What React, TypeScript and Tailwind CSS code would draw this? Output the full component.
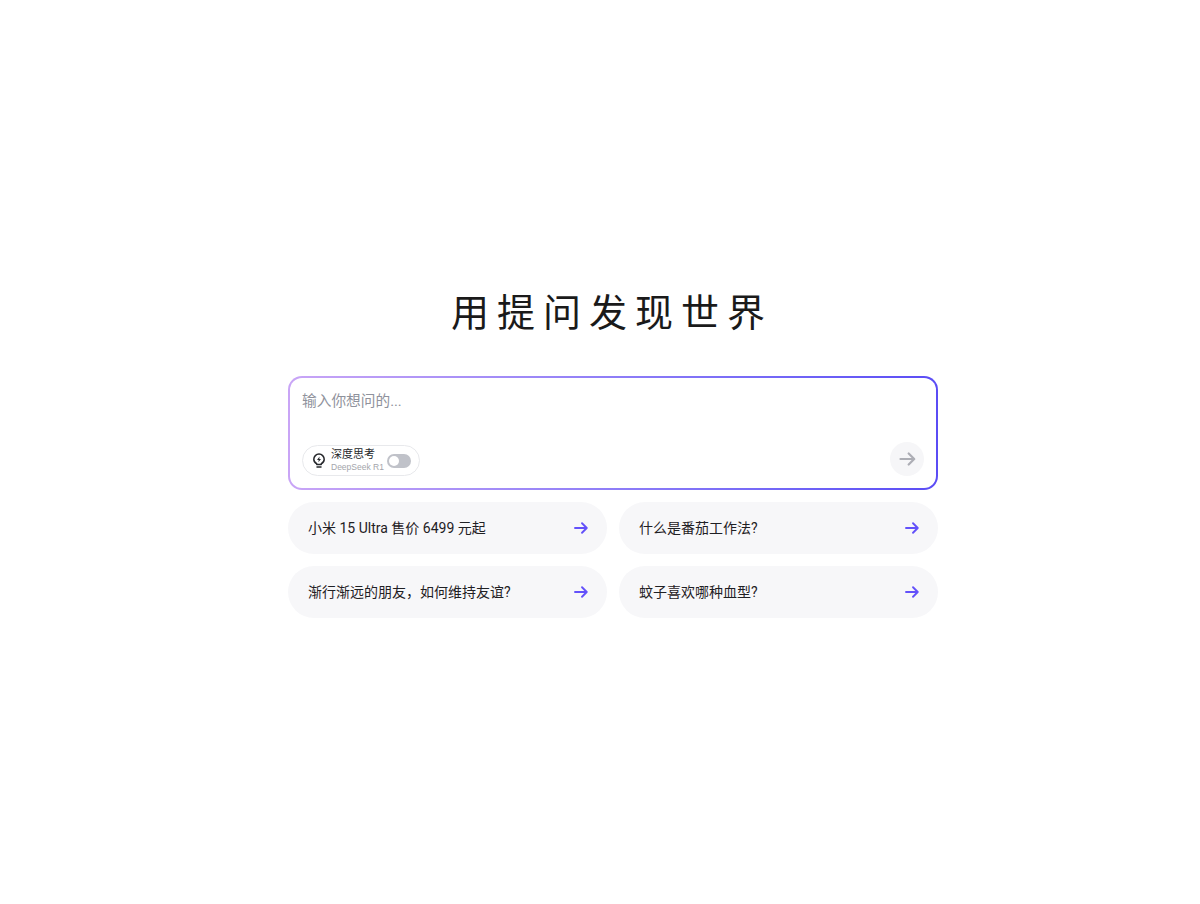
import React from "react";

const questions = [
  "小米 15 Ultra 售价 6499 元起",
  "什么是番茄工作法?",
  "渐行渐远的朋友，如何维持友谊?",
  "蚊子喜欢哪种血型?",
];

const FONT = "font-['Roboto','Noto_Sans_CJK_SC',sans-serif]";

const ArrowIcon = ({ className }: { className: string }) => (
  <svg viewBox="0 0 16 14" fill="none" className={className}>
    <path
      d="M1 7H14.5M9.2 1.5 14.7 7l-5.5 5.5"
      stroke="currentColor"
      strokeWidth="2.2"
      strokeLinecap="round"
      strokeLinejoin="round"
    />
  </svg>
);

const BulbIcon = () => (
  <svg viewBox="0 0 16 16" fill="none" className="mb-[2px] h-4 w-4 text-[#26282c]">
    <path
      d="M5.7 11.7C4 10.9 2.8 9.3 2.8 7.3a5.2 5.2 0 0 1 10.4 0c0 2-1.2 3.6-2.9 4.4v.9H5.7z"
      stroke="currentColor"
      strokeWidth="1.5"
      strokeLinejoin="round"
    />
    <path d="M6 15h4" stroke="currentColor" strokeWidth="1.5" strokeLinecap="round" />
    <path d="M8.6 4.6 6 7.9h1.7l-.3 2.4 2.6-3.3H8.3z" fill="currentColor" />
  </svg>
);

export default function App() {
  return (
    <div className={`${FONT} min-h-[904px] bg-white pt-[288px] pl-[288px]`}>
      <div className="w-[650px]">
        <h1 className="mb-[38px] pr-[2px] text-center text-[38px] leading-[50px] font-normal tracking-[8px] text-[#1a1a1a]">
          用提问发现世界
        </h1>

        <div className="h-[114px] rounded-[14px] bg-gradient-to-r from-[#c9a5f6] to-[#5b4cf5] p-[2px]">
          <div className="flex h-full flex-col justify-between rounded-[12px] bg-white pt-[13px] pr-3 pb-[12px] pl-3">
            <div className="text-[14.7px] leading-[20px] text-[#8f929c]">输入你想问的...</div>
            <div className="flex items-end justify-between">
              <div className="flex h-[31px] w-[118px] items-center rounded-full border border-[#e8e9ec] pl-[8px]">
                <BulbIcon />
                <div className="ml-[4px] flex w-[56px] flex-col">
                  <span className="text-[11px] leading-[13px] text-[#26282c]">深度思考</span>
                  <span className="font-['Liberation_Sans',sans-serif] text-[8.5px] leading-[12px] whitespace-nowrap text-[#a3a5ab]">
                    DeepSeek R1
                  </span>
                </div>
                <div className="flex h-[14px] w-[24px] items-center rounded-full bg-[#c0c2c9] pl-[2px]">
                  <div className="h-[10px] w-[10px] rounded-full bg-white" />
                </div>
              </div>
              <button className="flex h-[34px] w-[34px] items-center justify-center rounded-full bg-[#f6f6f8] text-[#adaeb5]">
                <ArrowIcon className="h-[14px] w-[17px]" />
              </button>
            </div>
          </div>
        </div>

        <div className="mt-3 grid grid-cols-2 gap-3">
          {questions.map((q) => (
            <div
              key={q}
              className="flex h-[52px] items-center justify-between rounded-[26px] bg-[#f7f7f9] pr-[19px] pl-5"
            >
              <span className="text-[14px] text-[#1f2024]">{q}</span>
              <ArrowIcon className="h-[12px] w-[14px] text-[#6351fa]" />
            </div>
          ))}
        </div>
      </div>
    </div>
  );
}
